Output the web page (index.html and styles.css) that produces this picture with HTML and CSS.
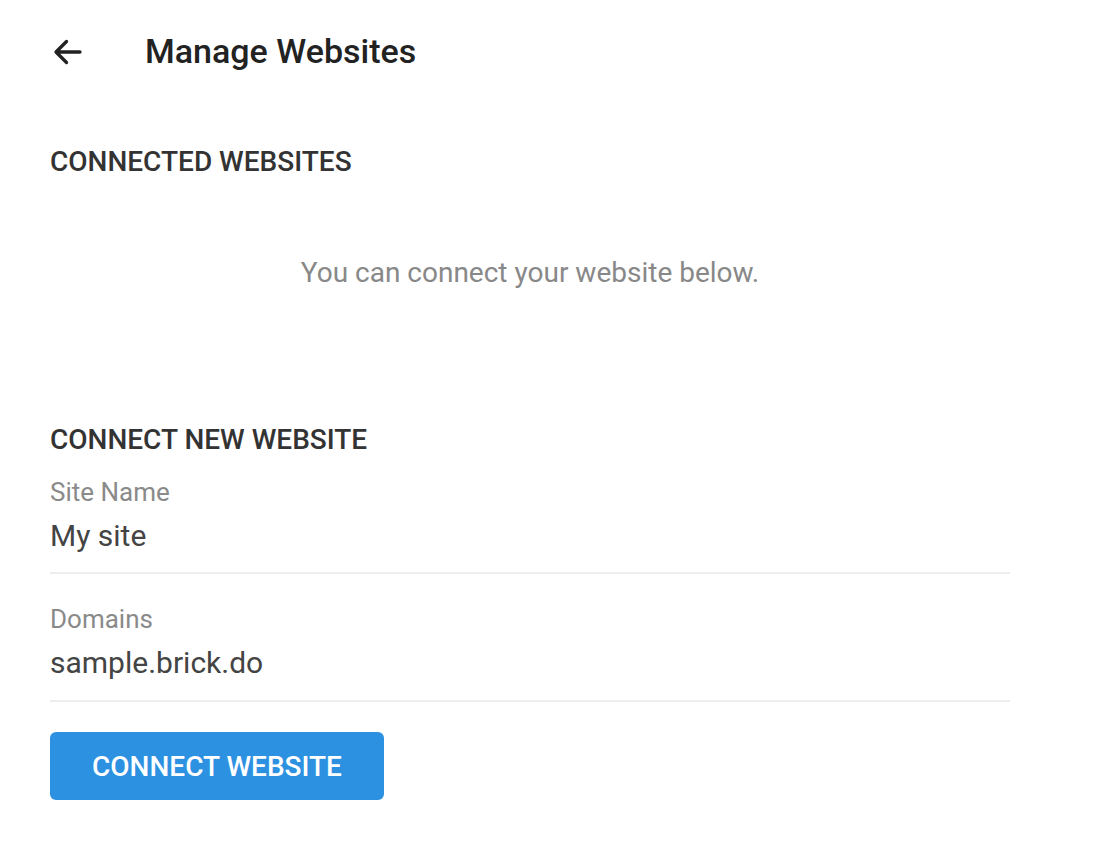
FILE: index.html
```html
<!DOCTYPE html>
<html>
<head>
<meta charset="utf-8">
<link rel="stylesheet" href="styles.css">
</head>
<body>
<div class="page">
  <header class="topbar">
    <button class="back" aria-label="Back">
      <svg width="36" height="36" viewBox="0 0 24 24"><path d="M20 12H4M11 5l-7 7 7 7" fill="none" stroke="#222" stroke-width="2.2" stroke-linecap="round" stroke-linejoin="round"/></svg>
    </button>
    <h1 class="title">Manage Websites</h1>
  </header>

  <section class="section connected">
    <h2 class="section-title">CONNECTED WEBSITES</h2>
    <p class="empty">You can connect your website below.</p>
  </section>

  <section class="section new">
    <h2 class="section-title">CONNECT NEW WEBSITE</h2>
    <div class="field">
      <label class="label">Site Name</label>
      <div class="value">My site</div>
    </div>
    <div class="field last">
      <label class="label">Domains</label>
      <div class="value">sample.brick.do</div>
    </div>
    <button class="primary">CONNECT WEBSITE</button>
  </section>
</div>
</body>
</html>
```
FILE: styles.css
```css
* { box-sizing: border-box; }
html, body { margin: 0; padding: 0; background: #fff; }
body { font-family: Roboto, "Noto Sans", sans-serif; color: #333; }

.page { padding: 0 98px 0 50px; width: 1108px; }

.topbar { display: flex; align-items: center; height: 104px; }
.back { background: none; border: 0; padding: 0; width: 36px; height: 36px; display: flex; align-items: center; justify-content: center; cursor: pointer; }
.title { margin: 0 0 0 59px; font-size: 34px; font-weight: 500; color: #222; position: relative; top: -1px; }

.section-title { margin: 0; font-size: 28px; font-weight: 500; color: #333; line-height: 32px; }
.connected .section-title { padding-top: 42px; }
.empty { margin: 0; padding: 79px 0 0; text-align: center; font-size: 28px; color: #888; line-height: 32px; height: 246px; }

.new .section-title { margin-bottom: 22px; }
.field { border-bottom: 2px solid #eeeeee; padding-bottom: 18px; margin-bottom: 31px; }
.field.last { padding-bottom: 19px; margin-bottom: 30px; }
.label { display: block; font-size: 26px; color: #8a8a8a; line-height: 28px; margin-bottom: 12px; }
.value { font-size: 30px; color: #444; line-height: 36px; }

.primary { background: #2d91e2; color: #fff; border: 0; border-radius: 6px; height: 68px; width: 334px; font-family: Roboto, sans-serif; font-size: 28px; font-weight: 500; padding: 0; cursor: pointer; }
```
